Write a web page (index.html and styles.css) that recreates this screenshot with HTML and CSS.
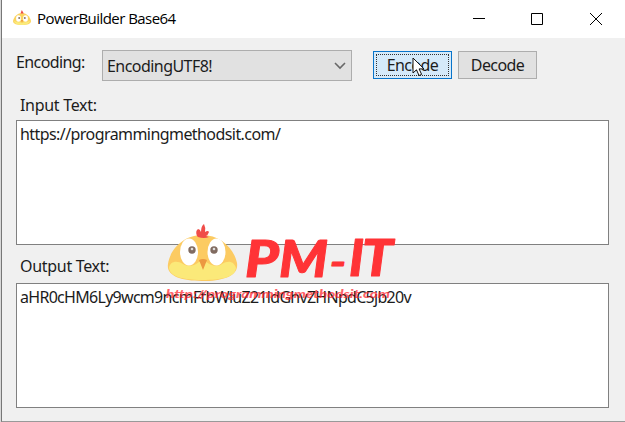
FILE: index.html
```html
<!DOCTYPE html>
<html lang="en">
<head>
<meta charset="utf-8">
<title>PowerBuilder Base64</title>
<link rel="stylesheet" href="styles.css">
</head>
<body>
<div class="window">
  <header class="titlebar">
    <svg class="app-icon" width="18" height="16" viewBox="0 0 18 16">
      <path d="M0 11C1 6 5 3 9 3s8 3 9 8c0 3-4 4-9 4s-9-1-9-4z" fill="#fbd45f"/>
      <path d="M1 11q8 3 16 0c-1 3-4 4-8 4s-7-1-8-4z" fill="#fbeb7b"/>
      <ellipse cx="5.500" cy="8.500" rx="2.400" ry="3.200" fill="#fff"/><ellipse cx="12.500" cy="8.500" rx="2.400" ry="3.200" fill="#fff"/>
      <circle cx="6.200" cy="8" r="1" fill="#8a7767"/><circle cx="11.800" cy="8" r="1" fill="#8a7767"/>
      <path d="M7.500 3.500 8.800 0l2 3.500z" fill="#f04b42"/><path d="M8 10h2l-1 3z" fill="#ee963b"/>
    </svg>
    <h1 class="title">PowerBuilder Base64</h1>
    <svg class="controls" width="130" height="14" viewBox="0 0 130 14" fill="none" stroke="#000">
      <path d="M0 6.500h12M58.500 1.500h11v11h-11z"/><path d="M117 1l12 12M129 1l-12 12"/>
    </svg>
  </header>
  <main class="content">
    <div class="toolbar">
      <span class="label encoding">Encoding:</span>
      <div class="select"><span class="selected">EncodingUTF8!</span>
        <svg width="12" height="8" viewBox="0 0 12 8" fill="none" stroke="#686868" stroke-width="1.600"><path d="M1 1l5 5 5-5"/></svg>
      </div>
      <button class="button active"><span>Encode</span>
        <svg class="cursor" width="13" height="20" viewBox="0 0 13 20"><path d="M1 1v15l3.500-3.200 2.500 5.700 2.600-1.100-2.500-5.500H12z" fill="#fff" stroke="#111"/></svg>
      </button>
      <button class="button"><span>Decode</span></button>
    </div>
    <div class="label input-label"><span>Input Text:</span></div>
    <div class="field"><span class="input-value">https://programmingmethodsit.com/</span></div>
    <div class="label output-label"><span>Output Text:</span></div>
    <div class="field"><span class="output-value">aHR0cHM6Ly9wcm9ncmFtbWluZ21ldGhvZHNpdC5jb20v</span></div>
  </main>
  <svg class="watermark" width="240" height="84" viewBox="160 220 240 84">
    <path d="M168 264c2-15 16-29 34-29s32 13 35 28c2 13-14 18-35 18s-36-5-34-17z" fill="#fccb62"/>
    <path d="M169 268c1-7 8-8 14-4 7 4 12 1 16-2h7c5 3 10 6 16 2s12-3 14 4c-1 9-13 12-34 12s-32-4-33-12z" fill="#fbe979"/>
    <path d="M197 236q-2-5 1-7 2 0 3 3 0-6 3-8 2 4 1 8 3-2 4 0-1 3-3 4l3 1q-5 2-11 0z" fill="#f04d49"/>
    <ellipse cx="189" cy="252" rx="9" ry="13.500" fill="#fff"/><ellipse cx="216.500" cy="252" rx="9" ry="13.500" fill="#fff"/>
    <circle cx="192" cy="250" r="3.700" fill="#806b60"/><circle cx="214" cy="250" r="3.700" fill="#806b60"/>
    <circle cx="192" cy="249" r="1.300" fill="#ddd"/><circle cx="214" cy="249" r="1.300" fill="#ddd"/>
    <path d="M199 260q4-2 8 0l-4 10z" fill="#ec9840"/>
    <g class="brand">
      <text x="245" y="277" textLength="34" lengthAdjust="spacingAndGlyphs">P</text>
      <text x="279" y="277" textLength="49" lengthAdjust="spacingAndGlyphs">M</text>
      <text class="dash" x="330" y="275" textLength="16" lengthAdjust="spacingAndGlyphs">-</text>
      <text x="349" y="276" textLength="15" lengthAdjust="spacingAndGlyphs">I</text>
      <text x="362" y="276" textLength="31" lengthAdjust="spacingAndGlyphs">T</text>
    </g>
    <text class="url" x="166" y="298" textLength="224" lengthAdjust="spacingAndGlyphs">http://programmingmethodsit.com</text>
  </svg>
</div>
</body>
</html>
```

FILE: styles.css
```css
* { box-sizing: border-box; }
body { margin: 0; background: #d8d8d8; font: 16px "Noto Sans", sans-serif; color: #1c1c1c; }
.window { position: relative; width: 624px; height: 422px; margin-left: 1px; border-left: 1px solid #777; border-bottom: 1px solid #999; background: #f0f0f0; overflow: hidden; }
.titlebar { height: 38px; background: #fff; display: flex; align-items: center; padding: 0 22px 0 11px; }
.app-icon { margin-bottom: 2px; }
.title { flex: 1; margin: -2px 0 0 6px; font: 400 15px/20px "Open Sans", sans-serif; color: #000; letter-spacing: -.55px; }
.content { padding: 12px 16px 0 14px; }
.toolbar { display: flex; align-items: flex-start; height: 44px; }
.label { line-height: 20px; letter-spacing: -.3px; }
.encoding { width: 86px; padding-top: 2px; letter-spacing: -.6px; }
.select { width: 250px; height: 31px; border: 1px solid #adadad; background: #e1e1e1; display: flex; align-items: center; justify-content: space-between; padding: 0 5px 0 4px; margin-right: 21px; letter-spacing: -.55px; }
.button { position: relative; width: 79px; height: 28px; margin: 1px 6px 0 0; padding: 0; border: 1px solid #adadad; background: #e1e1e1; font: inherit; line-height: 26px; color: inherit; letter-spacing: -.6px; }
.active { border: 1px solid #0874ca; background: #d5eafa; outline: 1px dotted #333; outline-offset: -4px; }
.cursor { position: absolute; left: 38px; top: 5px; }
.input-label { height: 26px; padding: 1px 0 0 4px; }
.output-label { height: 38px; padding: 11px 0 0 4px; }
.field { width: 593px; height: 125px; border: 1px solid #808080; background: #fff; padding: 3px; line-height: 20px; white-space: nowrap; }
.input-value { letter-spacing: -.57px; }
.output-value { letter-spacing: -.71px; }
.watermark { position: absolute; left: 158px; top: 220px; }
.brand { font: italic 900 52px "Lato", sans-serif; fill: #ff3336; stroke: #ff3336; stroke-width: 1; stroke-linejoin: round; }
.dash { font-size: 36px; }
.url { font: italic 900 12px "Lato", sans-serif; fill: #ff2028; opacity: .7; }
```
